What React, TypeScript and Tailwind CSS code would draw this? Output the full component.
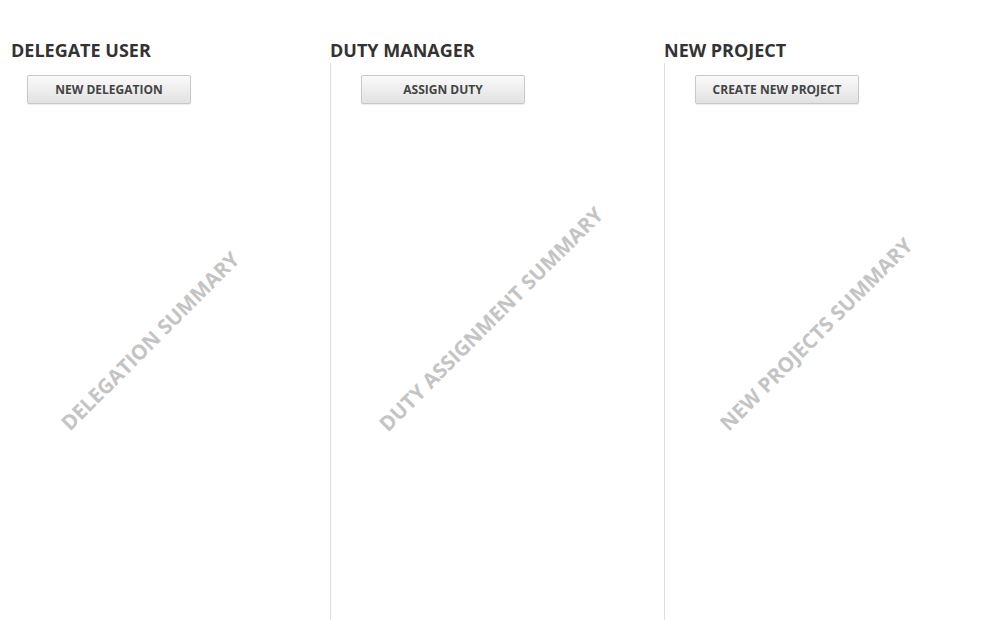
import React from "react";

const columns = [
  {
    title: "DELEGATE USER",
    action: "NEW DELEGATION",
    summary: "DELEGATION SUMMARY",
    first: true,
    markLeft: "left-[150px]",
    markTop: "top-[278px]",
  },
  {
    title: "DUTY MANAGER",
    action: "ASSIGN DUTY",
    summary: "DUTY ASSIGNMENT SUMMARY",
    first: false,
    markLeft: "left-[160px]",
    markTop: "top-[256px]",
  },
  {
    title: "NEW PROJECT",
    action: "CREATE NEW PROJECT",
    summary: "NEW PROJECTS SUMMARY",
    first: false,
    markLeft: "left-[151px]",
    markTop: "top-[271px]",
  },
];

function Column({ col }: { col: (typeof columns)[number] }) {
  return (
    <div className="flex w-[334px] shrink-0 flex-col">
      {/* Heading */}
      <h2
        className={`h-[25px] text-[18px] leading-[24px] font-bold text-[#333333] ${
          col.first ? "pl-[11px]" : ""
        }`}
      >
        {col.title}
      </h2>
      {/* Body */}
      <div
        className={`relative flex-1 pt-[12px] ${
          col.first ? "pl-[27px]" : "border-l border-[#dedede] pl-[30px]"
        }`}
      >
        <button className="flex h-[29px] w-[164px] items-center justify-center rounded-[2px] border border-[#c8c8c8] bg-gradient-to-b from-[#fafafa] to-[#e2e2e2] text-[12px] font-bold text-[#444444] shadow-[0_1px_1px_rgba(0,0,0,0.08)]">
          {col.action}
        </button>
        <div
          className={`pointer-events-none absolute ${col.markLeft} ${col.markTop} -translate-x-1/2 -translate-y-1/2 -rotate-45 whitespace-nowrap text-[20.5px] font-bold text-[#c4c4c4]`}
        >
          {col.summary}
        </div>
      </div>
    </div>
  );
}

export default function App() {
  return (
    <div
      className="flex h-[620px] w-[1005px] overflow-hidden bg-white pt-[38px]"
      style={{ fontFamily: '"Open Sans", "Liberation Sans", sans-serif' }}
    >
      <div className="flex w-[330px] shrink-0">
        <Column col={columns[0]} />
      </div>
      <Column col={columns[1]} />
      <Column col={columns[2]} />
    </div>
  );
}
